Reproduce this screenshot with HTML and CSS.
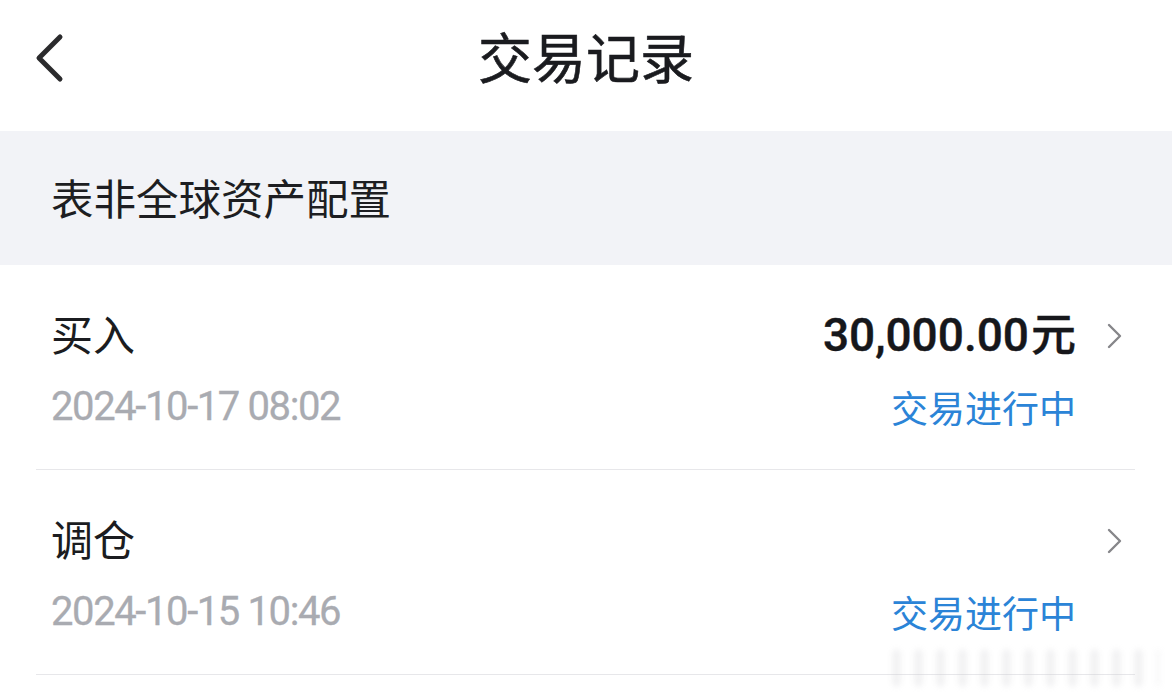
FILE: index.html
```html
<!DOCTYPE html>
<html lang="zh-CN">
<head>
<meta charset="utf-8">
<title>交易记录</title>
<link rel="stylesheet" href="styles.css">
</head>
<body>
<div class="page">
  <header class="topbar">
    <div class="back">
      <svg width="30" height="50" viewBox="0 0 30 50"><path d="M26 4 L5 25 L26 46" fill="none" stroke="#2b2b2d" stroke-width="5" stroke-linecap="round" stroke-linejoin="round"/></svg>
    </div>
    <h1 class="title">交易记录</h1>
    <div class="spacer"></div>
  </header>

  <section class="group">表非全球资产配置</section>

  <ul class="list">
    <li class="row">
      <div class="main">
        <div class="line1">
          <span class="name">买入</span>
          <span class="amount">30,000.00<span class="unit">元</span></span>
        </div>
        <div class="line2">
          <span class="date">2024-10-17 08:02</span>
          <span class="status">交易进行中</span>
        </div>
      </div>
      <div class="arrow">
        <svg width="16" height="26" viewBox="0 0 16 26"><path d="M2 2 L13 13 L2 24" fill="none" stroke="#86868a" stroke-width="2.4" stroke-linecap="round" stroke-linejoin="round"/></svg>
      </div>
    </li>
    <li class="row">
      <div class="main">
        <div class="line1">
          <span class="name">调仓</span>
          <span class="amount"></span>
        </div>
        <div class="line2">
          <span class="date">2024-10-15 10:46</span>
          <span class="status">交易进行中</span>
        </div>
      </div>
      <div class="arrow">
        <svg width="16" height="26" viewBox="0 0 16 26"><path d="M2 2 L13 13 L2 24" fill="none" stroke="#86868a" stroke-width="2.4" stroke-linecap="round" stroke-linejoin="round"/></svg>
      </div>
    </li>
  </ul>
  <div class="watermark"></div>
</div>
</body>
</html>
```

FILE: styles.css
```css
* { box-sizing: border-box; }
html, body {
  margin: 0;
  padding: 0;
  background: #ffffff;
}
body {
  font-family: "Noto Sans CJK SC", "Noto Sans", sans-serif;
  color: #1b1c20;
}
.page {
  position: relative;
  width: 1172px;
  height: 698px;
  overflow: hidden;
}
.topbar {
  height: 131px;
  display: grid;
  grid-template-columns: 1fr auto 1fr;
  align-items: center;
  padding-bottom: 20px;
}
.back {
  padding-left: 34px;
  display: flex;
  align-items: center;
  padding-top: 4px;
}
.back svg { display: block; }
.title {
  margin: 0;
  font-size: 54px;
  font-weight: 400;
  line-height: 60px;
  color: #1a1b1f;
  -webkit-text-stroke: 0.6px #1a1b1f;
}
.group {
  height: 134px;
  background: #f2f3f7;
  display: flex;
  align-items: center;
  padding-left: 51px;
  padding-bottom: 2px;
  font-size: 42.5px;
  line-height: 50px;
  color: #1d1e22;
}
.list {
  list-style: none;
  margin: 0;
  padding: 0;
}
.row {
  height: 205px;
  margin: 0 37px 0 36px;
  border-bottom: 1px solid #e7e7ea;
  display: flex;
}
.main {
  flex: 1;
  padding-left: 15px;
  padding-top: 43px;
}
.line1 {
  height: 50px;
  display: flex;
  justify-content: space-between;
  align-items: center;
}
.name {
  font-size: 42px;
  line-height: 50px;
  color: #1b1c20;
}
.amount {
  font-family: Roboto, "Noto Sans CJK SC", sans-serif;
  font-weight: 500;
  font-size: 46px;
  line-height: 50px;
  color: #16171b;
  -webkit-text-stroke: 0.4px #16171b;
}
.unit {
  font-family: "Noto Sans CJK SC", sans-serif;
  font-weight: 500;
  font-size: 45px;
  margin-left: 2px;
}
.line2 {
  margin-top: 27px;
  height: 44px;
  display: flex;
  justify-content: space-between;
  align-items: center;
}
.date {
  font-family: Roboto, sans-serif;
  font-weight: 400;
  font-size: 40px;
  letter-spacing: -1.4px;
  line-height: 44px;
  color: #a9abb1;
  -webkit-text-stroke: 0.3px #a9abb1;
}
.status {
  font-size: 37px;
  line-height: 44px;
  color: #2b84d7;
}
.arrow {
  width: 59px;
  padding-left: 31px;
  padding-top: 58px;
}
.arrow svg { display: block; }
.watermark {
  position: absolute;
  left: 893px;
  top: 650px;
  width: 266px;
  height: 36px;
  background: repeating-linear-gradient(90deg, rgba(200,200,204,0.5) 0 7px, rgba(255,255,255,0) 7px 22px);
  filter: blur(3px);
  opacity: 0.6;
}
```
